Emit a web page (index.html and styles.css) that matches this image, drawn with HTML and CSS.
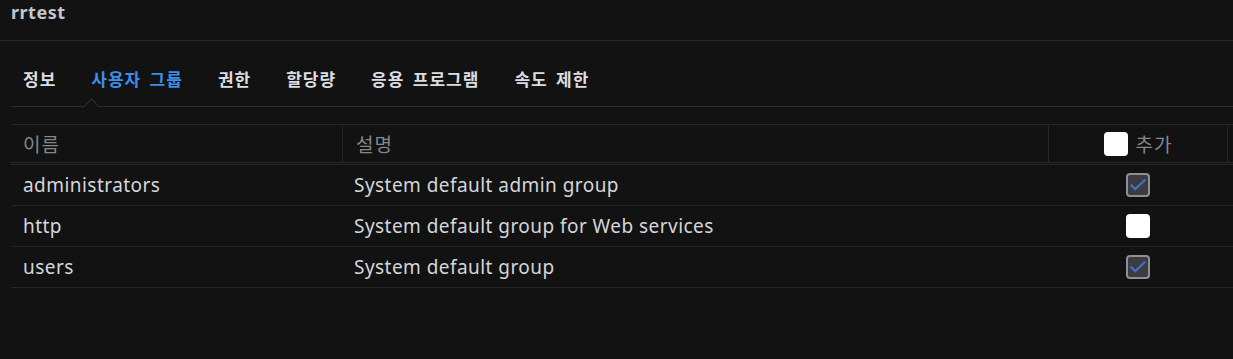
FILE: index.html
```html
<!DOCTYPE html>
<html lang="ko">
  <head>
    <meta charset="UTF-8" />
    <title>rrtest</title>
    <link rel="stylesheet" href="styles.css">
  </head>
  <body>
    <div class="header">rrtest</div>

    <div class="tabs">
      <div class="tab">정보</div>
      <div class="tab active">사용자 그룹</div>
      <div class="tab">권한</div>
      <div class="tab">할당량</div>
      <div class="tab">응용 프로그램</div>
      <div class="tab">속도 제한</div>
    </div>

    <div class="grid">
      <div class="row head">
        <div class="cell">이름</div>
        <div class="cell sep">설명</div>
        <div class="cell sep center"><span class="box"></span>추가</div>
        <div class="cell sep"></div>
      </div>
      <div class="row">
        <div class="cell">administrators</div>
        <div class="cell">System default admin group</div>
        <div class="cell center"><span class="box checked"></span></div>
        <div class="cell"></div>
      </div>
      <div class="row">
        <div class="cell">http</div>
        <div class="cell">System default group for Web services</div>
        <div class="cell center"><span class="box"></span></div>
        <div class="cell"></div>
      </div>
      <div class="row">
        <div class="cell">users</div>
        <div class="cell">System default group</div>
        <div class="cell center"><span class="box checked"></span></div>
        <div class="cell"></div>
      </div>
    </div>
  </body>
</html>
```

FILE: styles.css
```css
* {
  margin: 0;
  padding: 0;
  box-sizing: border-box;
}

body {
  background: #121212;
  color: #d4d6da;
  font-family: "Noto Sans", "Noto Sans CJK KR", sans-serif;
  width: 1233px;
  height: 359px;
  overflow: hidden;
}

.header {
  height: 41px;
  padding: 0 11px;
  font-size: 18px;
  font-weight: 700;
  letter-spacing: 0.5px;
  color: #c4c6ca;
  border-bottom: 1px solid #2a2a2a;
}

.tabs {
  display: flex;
  gap: 35px;
  margin-left: 11px;
  height: 66px;
  padding: 25px 0 0 12px;
  border-bottom: 1px solid #2e2e2e;
}

.tab {
  position: relative;
  font-size: 17px;
  font-weight: 700;
  letter-spacing: 1px;
  word-spacing: 3px;
  color: #dcdde0;
  height: 41px;
}

.tab.active {
  color: #3d8fe6;
}

.tab.active::after {
  content: "";
  position: absolute;
  left: 50%;
  bottom: -1px;
  width: 12px;
  height: 12px;
  margin-left: -52px;
  background: #121212;
  border-left: 1px solid #2e2e2e;
  border-top: 1px solid #2e2e2e;
  transform: translateY(6px) rotate(45deg);
}

.grid {
  margin: 17px 0 0 11px;
}

.row {
  display: grid;
  grid-template-columns: 331px 706px 179px 1fr;
  height: 41px;
  border-bottom: 1px solid #262626;
  font-size: 19px;
  letter-spacing: 0.45px;
}

.row.head {
  border-top: 1px solid #262626;
  border-bottom: 3px double #262626;
  color: #85878b;
  letter-spacing: 1px;
}

.cell {
  display: flex;
  align-items: center;
  padding: 0 12px;
  white-space: nowrap;
}

.cell.sep {
  border-left: 1px solid #262626;
  padding-left: 13px;
}

.cell.center {
  justify-content: center;
  gap: 8px;
  padding: 0;
}

.box {
  display: inline-block;
  width: 24px;
  height: 24px;
  background: #ffffff;
  border-radius: 4px;
}

.box.checked {
  background: #3a3c41
    url("data:image/svg+xml,%3Csvg xmlns='http://www.w3.org/2000/svg' viewBox='0 0 24 24'%3E%3Cpath d='M4 11.5l5 5L20 6' fill='none' stroke='%23416fbd' stroke-width='2.6'/%3E%3C/svg%3E")
    center / 22px no-repeat;
  border: 2px solid #8c8f94;
}
```
